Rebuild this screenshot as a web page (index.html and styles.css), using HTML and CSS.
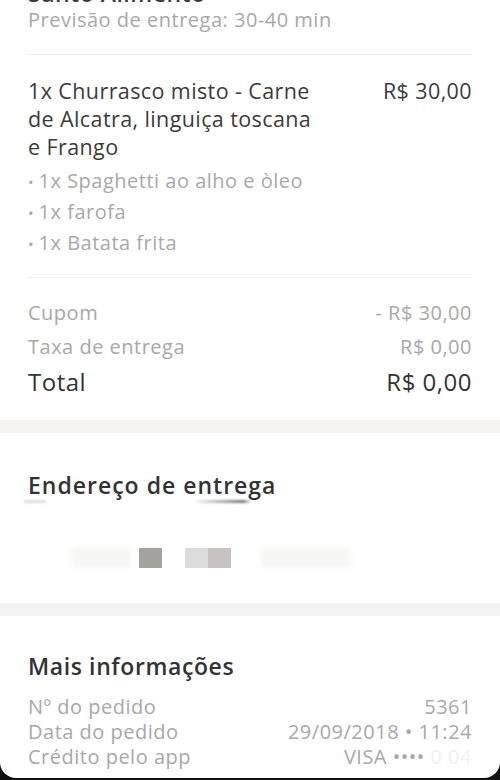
FILE: index.html
```html
<!DOCTYPE html>
<html lang="pt-BR">
<head>
  <meta charset="UTF-8" />
  <meta name="viewport" content="width=device-width, initial-scale=1.0"/>
  <title>Detalhes do pedido</title>
  <link rel="stylesheet" href="styles.css">
</head>
<body>
  <div class="screen">
    <section class="order">
      <h1 class="store">Santo Alimento</h1>
      <p class="eta">Previsão de entrega: 30-40 min</p>

      <div class="item">
        <div class="item-row">
          <div class="item-name">1x Churrasco misto - Carne de Alcatra, linguiça toscana e Frango</div>
          <div class="item-price">R$ 30,00</div>
        </div>
        <ul class="extras">
          <li>1x Spaghetti ao alho e òleo</li>
          <li>1x farofa</li>
          <li>1x Batata frita</li>
        </ul>
      </div>

      <div class="totals">
        <div class="line muted"><span>Cupom</span><span>- R$ 30,00</span></div>
        <div class="line muted"><span>Taxa de entrega</span><span>R$ 0,00</span></div>
        <div class="line total"><span>Total</span><span>R$ 0,00</span></div>
      </div>
    </section>

    <div class="band"></div>

    <section class="address">
      <h2>Endereço de entrega</h2>
      <div class="smudge-line">
        <span class="smudge s1"></span>
        <span class="smudge s2"></span>
      </div>
      <div class="hidden-address">
        <span class="blk faint w60"></span>
        <span class="blk dark"></span>
        <span class="blk light"></span>
        <span class="blk mid"></span>
        <span class="blk faint w90"></span>
      </div>
    </section>

    <div class="band"></div>

    <section class="info">
      <h2>Mais informações</h2>
      <div class="line muted"><span>Nº do pedido</span><span>5361</span></div>
      <div class="line muted"><span>Data do pedido</span><span>29/09/2018 • 11:24</span></div>
      <div class="line muted"><span>Crédito pelo app</span><span>VISA •••• <span class="masked">0 04</span></span></div>
    </section>
  </div>
</body>
</html>
```

FILE: styles.css
```css
body {
  margin: 0;
  background-color: #111;
  font-family: "Open Sans", "Noto Sans", sans-serif;
  color: #3b3b3b;
  letter-spacing: 0.5px;
}

.screen {
  width: 500px;
  height: 778px;
  background-color: white;
  border-radius: 0 0 16px 16px;
  overflow: hidden;
}

.order {
  padding: 0 28px;
  margin-top: -21px;
}

.store {
  margin: 0;
  font-size: 23px;
  line-height: 28px;
  font-weight: 600;
}

.eta {
  margin: 0;
  font-size: 20px;
  line-height: 26px;
  color: #a8a8a8;
  padding-bottom: 21px;
  border-bottom: 1px solid #f0eeeb;
}

.item {
  padding: 22px 0 18px;
  border-bottom: 1px solid #f0eeeb;
}

.item-row {
  display: flex;
  justify-content: space-between;
  gap: 20px;
  font-size: 21.5px;
  line-height: 28px;
  letter-spacing: 0.4px;
}

.item-name {
  width: 290px;
}

.item-price {
  white-space: nowrap;
}

.extras {
  list-style: none;
  margin: 5px 0 0;
  padding: 0;
  font-size: 20px;
  line-height: 30px;
  color: #a8a8a8;
}

.extras li::before {
  content: "• ";
  font-size: 15px;
}

.totals {
  padding: 18px 0 20px;
}

.line {
  display: flex;
  justify-content: space-between;
  font-size: 20px;
  line-height: 34px;
}

.muted {
  color: #a8a8a8;
}

.total {
  font-size: 24px;
  line-height: 36px;
  color: #333;
}

.band {
  height: 13px;
  background-color: #f5f3f1;
}

.address, .info {
  padding: 0 28px;
}

h2 {
  margin: 0;
  font-size: 23px;
  line-height: 30px;
  font-weight: 600;
  color: #333;
  letter-spacing: 0.6px;
}

.address h2 {
  margin-top: 37px;
  letter-spacing: 1px;
}

.smudge-line {
  display: flex;
  height: 4px;
  margin-left: -4px;
}

.smudge {
  height: 3px;
  background-color: #ddd;
  filter: blur(1px);
}

.s1 {
  width: 22px;
}

.s2 {
  width: 55px;
  margin-left: 150px;
  background: linear-gradient(to right, #f2f2f2, #777 85%, #eee);
}

.hidden-address {
  display: flex;
  align-items: center;
  margin: 44px 0 35px;
  height: 20px;
}

.blk {
  display: block;
  width: 23px;
  height: 20px;
}

.faint {
  background-color: #f7f7f5;
  filter: blur(2px);
}

.w60 {
  width: 60px;
  margin-left: 43px;
}

.w90 {
  width: 90px;
  margin-left: 30px;
}

.dark {
  background-color: #a5a3a0;
  margin-right: 23px;
  margin-left: 8px;
}

.light {
  background-color: #dcdcdc;
}

.mid {
  background-color: #c6c3c2;
}

.info h2 {
  margin-top: 35px;
  margin-bottom: 13px;
}

.info .line {
  line-height: 25px;
}

.masked {
  color: #f0f0f0;
}
```
